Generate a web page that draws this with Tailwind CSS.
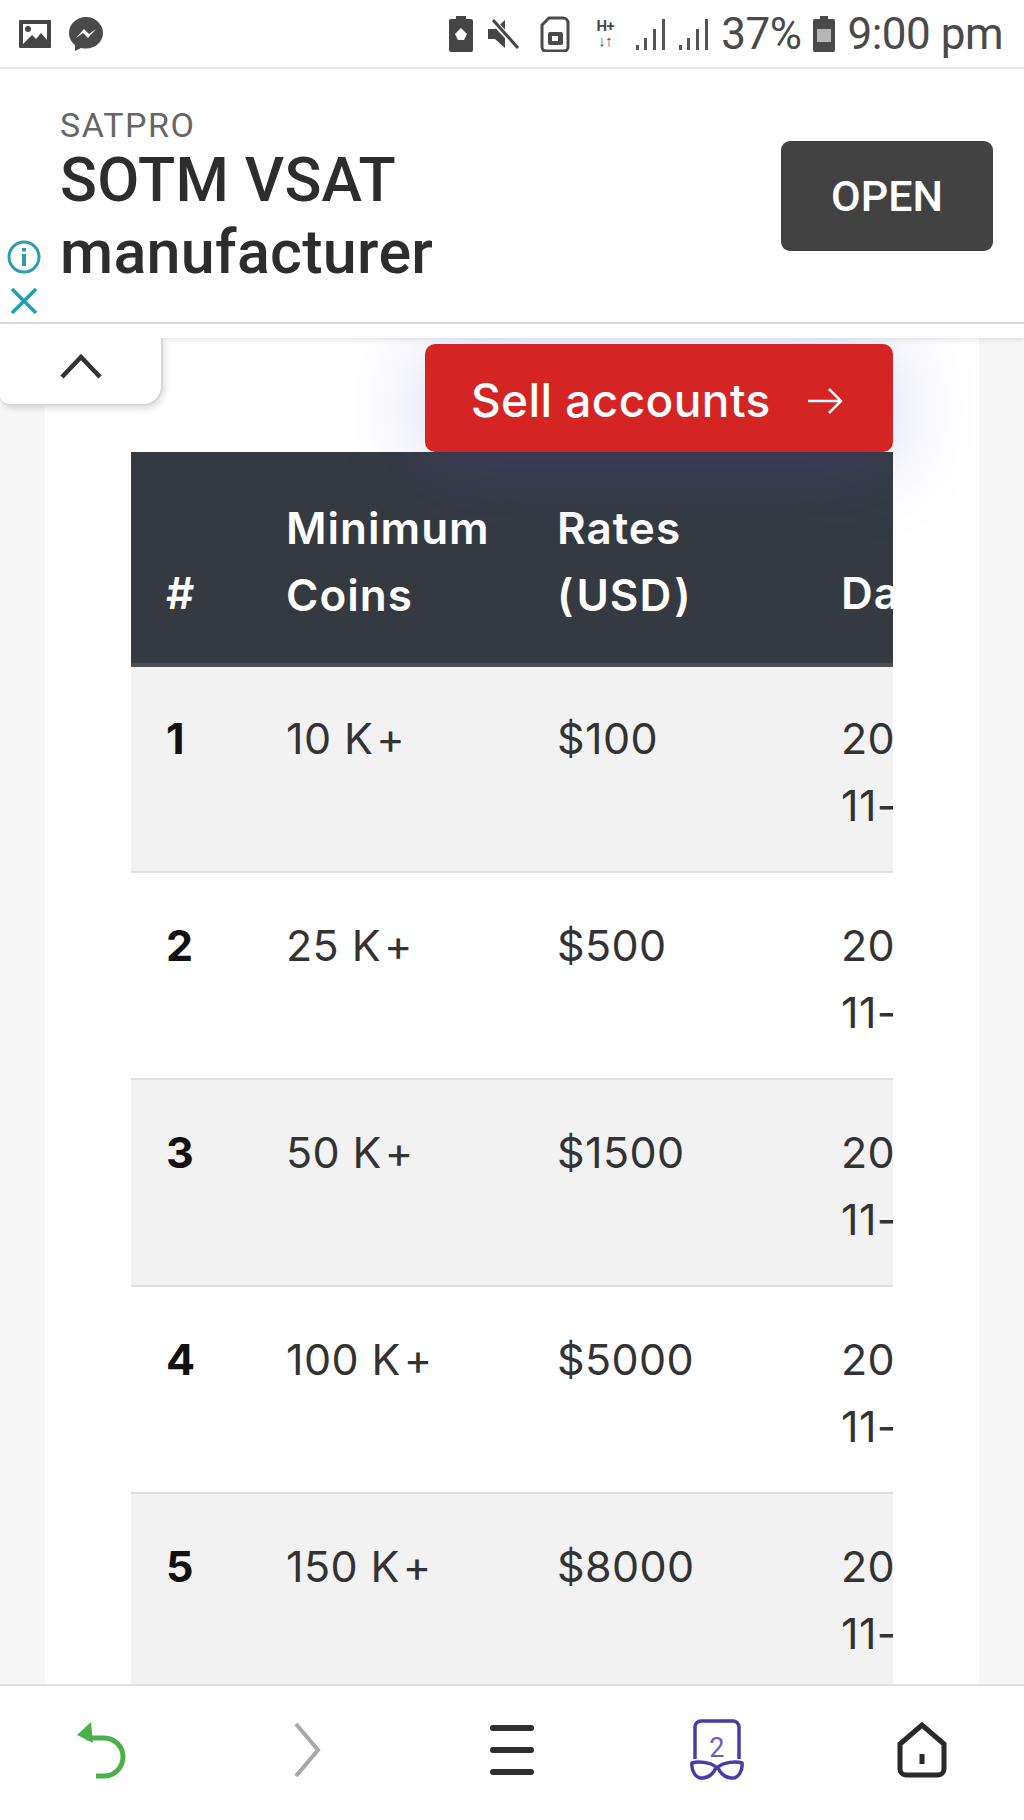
<!DOCTYPE html>
<html lang="en">
<head>
  <meta charset="UTF-8">
  <title>Sell accounts</title>
  <script src="https://cdn.jsdelivr.net/npm/@tailwindcss/browser@4"></script>
</head>
<body class="bg-white text-[#222] font-['Inter',sans-serif]">
<div class="w-[1024px] h-[1820px] flex flex-col overflow-hidden">

  <!-- status bar -->
  <div class="h-[69px] shrink-0 flex items-center justify-between pl-[18px] pr-[21px] text-[#4a4a4a] border-b-2 border-[#e6e6e6]">
    <div class="flex items-center gap-[16px]">
      <svg width="34" height="30" viewBox="0 0 34 30"><path d="M2 1h30a1 1 0 0 1 1 1v26a1 1 0 0 1-1 1H2a1 1 0 0 1-1-1V2a1 1 0 0 1 1-1z" fill="#454545"/><path d="M5 5h24v16l-6-7-5 6-4-4-9 9z" fill="#fff"/><circle cx="10" cy="10" r="3" fill="#454545"/></svg>
      <svg width="36" height="36" viewBox="0 0 36 36"><path d="M18 1C8.6 1 1 8 1 17c0 5 2.400 9.300 6 12v6l6-3c1.600.4 3.300.6 5 .6 9.400 0 17-7 17-15.600S27.400 1 18 1z" fill="#4a4a4a"/><path d="M8 22l8-9 5 5 7-5-8 9-5-5z" fill="#fff"/></svg>
    </div>
    <div class="flex items-center font-['Roboto',sans-serif] text-[44px] tracking-[-0.5px]">
      <svg class="mr-[13px]" width="24" height="36" viewBox="0 0 24 36"><path d="M7 0h10v3h5a2 2 0 0 1 2 2v29a2 2 0 0 1-2 2H2a2 2 0 0 1-2-2V5a2 2 0 0 1 2-2h5z" fill="#454545"/><path d="M12 12l6 6-3 6H9l-3-6z" fill="#fff"/></svg>
      <svg class="mr-[20px]" width="34" height="34" viewBox="0 0 34 34"><path d="M2 12h7l10-9v28L9 22H2z" fill="#454545"/><path d="M6 3l26 28" stroke="#fff" stroke-width="6"/><path d="M7 3l25 28" stroke="#454545" stroke-width="3"/></svg>
      <svg class="mr-[26px]" width="30" height="36" viewBox="0 0 30 36"><path d="M9 2h14a5 5 0 0 1 5 5v24a4 4 0 0 1-4 4H6a4 4 0 0 1-4-4V9z" fill="none" stroke="#4a4a4a" stroke-width="3"/><rect x="8" y="16" width="15" height="13" rx="2" fill="#4a4a4a"/><rect x="12" y="20" width="6" height="5" fill="#fff"/></svg>
      <div class="flex flex-col items-center text-[15px] leading-[15px] font-bold mr-[21px]"><span>H+</span><span>↓↑</span></div>
      <svg class="mr-[9px]" width="34" height="34" viewBox="0 0 34 34" fill="#555"><rect x="1" y="28" width="3" height="5"/><rect x="9" y="21" width="3" height="12"/><rect x="18" y="12" width="3" height="21"/><rect x="27" y="2" width="3" height="31"/></svg>
      <svg class="mr-[9px]" width="34" height="34" viewBox="0 0 34 34" fill="#555"><rect x="1" y="28" width="3" height="5"/><rect x="9" y="21" width="3" height="12"/><rect x="18" y="12" width="3" height="21"/><rect x="27" y="2" width="3" height="31"/></svg>
      <span>37%</span>
      <svg class="mx-[12px]" width="22" height="36" viewBox="0 0 22 36"><path d="M7 0h8v3h5a2 2 0 0 1 2 2v29a2 2 0 0 1-2 2H2a2 2 0 0 1-2-2V5a2 2 0 0 1 2-2h5z" fill="#4a4a4a"/><rect x="4" y="13" width="14" height="13" fill="#b5b5b5"/></svg>
      <span>9:00 pm</span>
    </div>
  </div>

  <!-- ad banner -->
  <div class="h-[255px] shrink-0 flex relative font-['Roboto',sans-serif] border-b-2 border-[#d6d6d6] bg-white">
    <div class="absolute left-[6px] top-[170px] flex flex-col items-center gap-[10px]">
      <svg width="36" height="36" viewBox="0 0 36 36" fill="none" stroke="#2e9bb0" stroke-width="3"><circle cx="18" cy="18" r="15"/><path d="M18 15v12M18 9v3.500" stroke-width="4"/></svg>
      <svg width="32" height="32" viewBox="0 0 32 32" fill="none" stroke="#1f9fb5" stroke-width="3.500"><path d="M4 4l24 24M28 4L4 28"/></svg>
    </div>
    <div class="pl-[60px] pt-[38px] flex-1">
      <div class="text-[34px] leading-[36px] tracking-[1.5px] text-[#666]">SATPRO</div>
      <div class="text-[61px] leading-[72px] mt-[1px] text-[#2d2d2d] font-medium tracking-[0.3px]">SOTM VSAT<br>manufacturer</div>
    </div>
    <div class="pr-[31px] pt-[72px]">
      <div class="w-[212px] h-[110px] bg-[#424242] rounded-[9px] flex items-center justify-center text-white text-[43px] font-medium pt-[1px]">OPEN</div>
    </div>
  </div>
  <div class="h-[14px] shrink-0 bg-white shadow-[0_3px_5px_rgba(0,0,0,0.08)] z-20"></div>

  <!-- page content -->
  <div class="flex-1 bg-[#f7f7f8] px-[45px] relative overflow-hidden">
    <div class="absolute left-0 top-0 w-[163px] h-[68px] bg-white rounded-br-[20px] rounded-bl-[10px] border-r-2 border-b-2 border-[#d8d8d8] shadow-[2px_3px_6px_rgba(0,0,0,0.12)] flex items-center justify-center pb-[10px] z-30">
      <svg width="42" height="26" viewBox="0 0 42 26" fill="none" stroke="#333" stroke-width="4.500"><path d="M2 24L21 4l19 20"/></svg>
    </div>
    <div class="bg-white h-full pl-[86px] pr-[86px] pt-[6px]">
      <div class="flex justify-end">
        <div class="relative z-10 w-[468px] h-[108px] bg-[#d42424] rounded-[10px] text-white flex items-center pl-[46px] text-[46px] font-medium tracking-[0.4px] pt-[5px] shadow-[0_10px_80px_rgba(80,80,220,0.25)]">
          Sell accounts
          <svg class="ml-[36px]" width="36" height="30" viewBox="0 0 36 30" fill="none" stroke="#fff" stroke-width="2.500"><path d="M1 15h33M22 3l12 12-12 12"/></svg>
        </div>
      </div>
      <div class="overflow-hidden w-[762px] relative">
        <table class="table-fixed w-[1000px] border-collapse text-[43px] leading-[67px] tracking-[0.4px]">
          <colgroup>
            <col class="w-[120px]"><col class="w-[271px]"><col class="w-[284px]"><col class="w-[325px]">
          </colgroup>
          <thead class="bg-[#343a40] text-white text-[44px] tracking-[1px]">
            <tr class="h-[213px] border-b-4 border-[#4a4f55]">
              <th class="pl-[35px] align-middle pt-[72px] text-left font-semibold">#</th>
              <th class="pl-[35px] pt-[8px] text-left font-semibold">Minimum<br>Coins</th>
              <th class="pl-[35px] pt-[8px] text-left font-semibold">Rates<br>(<span class="mx-[2px]">USD</span>)</th>
              <th class="pl-[35px] pt-[72px] text-left font-semibold">Date</th>
            </tr>
          </thead>
          <tbody class="text-[#333]">
            <tr class="h-[207px] bg-[#f2f2f2] border-b-2 border-[#e0e0e0] align-top">
              <td class="pl-[35px] pt-[38px] font-bold text-[#111]">1</td><td class="pl-[35px] pt-[38px]">10 K<span class="ml-[3px]">+</span></td><td class="pl-[35px] pt-[38px]">$100</td><td class="pl-[35px] pt-[38px]">2023-<br>11-15</td>
            </tr>
            <tr class="h-[207px] bg-white border-b-2 border-[#e0e0e0] align-top">
              <td class="pl-[35px] pt-[39px] font-bold text-[#111]">2</td><td class="pl-[35px] pt-[39px]">25 K<span class="ml-[3px]">+</span></td><td class="pl-[35px] pt-[39px]">$500</td><td class="pl-[35px] pt-[39px]">2023-<br>11-15</td>
            </tr>
            <tr class="h-[207px] bg-[#f2f2f2] border-b-2 border-[#e0e0e0] align-top">
              <td class="pl-[35px] pt-[39px] font-bold text-[#111]">3</td><td class="pl-[35px] pt-[39px]">50 K<span class="ml-[3px]">+</span></td><td class="pl-[35px] pt-[39px]">$1500</td><td class="pl-[35px] pt-[39px]">2023-<br>11-15</td>
            </tr>
            <tr class="h-[207px] bg-white border-b-2 border-[#e0e0e0] align-top">
              <td class="pl-[35px] pt-[39px] font-bold text-[#111]">4</td><td class="pl-[35px] pt-[39px]">100 K<span class="ml-[3px]">+</span></td><td class="pl-[35px] pt-[39px]">$5000</td><td class="pl-[35px] pt-[39px]">2023-<br>11-15</td>
            </tr>
            <tr class="h-[207px] bg-[#f2f2f2] align-top">
              <td class="pl-[35px] pt-[39px] font-bold text-[#111]">5</td><td class="pl-[35px] pt-[39px]">150 K<span class="ml-[3px]">+</span></td><td class="pl-[35px] pt-[39px]">$8000</td><td class="pl-[35px] pt-[39px]">2023-<br>11-15</td>
            </tr>
          </tbody>
        </table>
      </div>
    </div>
  </div>

  <!-- browser toolbar -->
  <div class="h-[136px] shrink-0 bg-white border-t-2 border-[#e2e2e2] flex items-center pb-[6px]">
    <div class="flex-1 flex justify-center">
      <svg width="56" height="60" viewBox="0 0 56 60" fill="none" stroke="#4cb04a" stroke-width="5"><path d="M12 18h18a19 19 0 0 1 0 38h-8"/><path d="M17 2L3 15l16 8z" fill="#4cb04a" stroke="none"/></svg>
    </div>
    <div class="flex-1 flex justify-center">
      <svg width="30" height="56" viewBox="0 0 30 56" fill="none" stroke="#a8a8a8" stroke-width="4"><path d="M4 2l22 26L4 54"/></svg>
    </div>
    <div class="flex-1 flex justify-center">
      <svg width="44" height="52" viewBox="0 0 44 52" fill="#2f2f2f"><rect y="1" width="44" height="6" rx="3"/><rect y="23" width="44" height="6" rx="3"/><rect y="45" width="44" height="6" rx="3"/></svg>
    </div>
    <div class="flex-1 flex justify-center relative">
      <svg width="58" height="62" viewBox="0 0 58 62" fill="none" stroke="#4b3ba8" stroke-width="3.500"><path d="M7 40V8a6 6 0 0 1 6-6h32a6 6 0 0 1 6 6v32"/><path d="M28 48C22 43 10 42 4 44c-1 8 4 16 11 15 6 0 12-6 13-11zM30 48c6-5 18-6 24-4 1 8-4 16-11 15-6 0-12-6-13-11z"/></svg>
      <span class="absolute top-[14px] text-[27px] leading-[30px] text-[#6a5cc0] font-['Roboto',sans-serif]">2</span>
    </div>
    <div class="flex-1 flex justify-center">
      <svg width="50" height="56" viewBox="0 0 50 56" fill="none" stroke="#2a2a2a" stroke-width="5"><path d="M3 47V22L25 3l22 19v25a6 6 0 0 1-6 6H9a6 6 0 0 1-6-6z"/><path d="M25 32v10"/></svg>
    </div>
  </div>
</div>
</body>
</html>
